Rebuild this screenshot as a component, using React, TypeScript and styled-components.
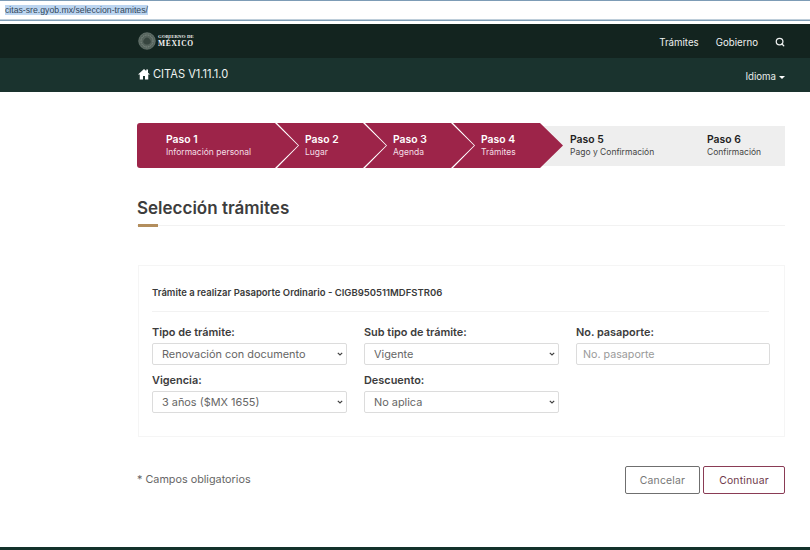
import React from 'react';
import styled, { createGlobalStyle } from 'styled-components';
import { Search } from 'lucide-react';

const chevron = `url("data:image/svg+xml,%3Csvg xmlns='http://www.w3.org/2000/svg' width='6' height='4' viewBox='0 0 6 4'%3E%3Cpath d='M.8.8 3 3l2.200-2.200' fill='none' stroke='%23444' stroke-width='1.200'/%3E%3C/svg%3E")`;

const Global = createGlobalStyle`
  html, body { margin: 0; padding: 0; background: #fff; }
  body { font-family: Inter, "Open Sans", sans-serif; width: 810px; height: 550px; overflow: hidden; }
  * { box-sizing: border-box; }
`;
const Page = styled.div`
  width: 810px; height: 550px; display: flex; flex-direction: column;
`;
const UrlBar = styled.div`
  height: 24px; padding: 4px 0 0 5px; background: #fff; flex: none;
  border-top: 1.5px solid #7d9cb6;
  box-shadow: inset 0 -3px 0 #fff, inset 0 -4.500px 0 #7f9db6;
  display: flex; align-items: flex-start;
`;
const UrlText = styled.span`
  font: 8.700px/10px "Liberation Sans", sans-serif; color: #33475a; background: #bcd5f0;
`;
const TopBar = styled.div`
  height: 34px; flex: none; background: #13241f; color: #fff;
  display: flex; align-items: center; padding: 0 25px 0 138px; justify-content: space-between;
`;
const Brand = styled.div`display: flex; align-items: center; gap: 2px;`;
const BrandText = styled.div`
  display: flex; flex-direction: column; font-family: "Liberation Serif", serif; font-weight: 700; color: #f2f2f2;
`;
const BrandSmall = styled.span`font-size: 4.800px; line-height: 6px; letter-spacing: .15px;`;
const BrandBig = styled.span`font-size: 7.500px; line-height: 8px; letter-spacing: .700px;`;
const TopNav = styled.nav`display: flex; align-items: center; gap: 17px; font-size: 9.700px; color: #eef1f0; margin-top: 2px;`;
const SubBar = styled.div`
  height: 34px; flex: none; background: #1a332e; color: #fff;
  display: flex; align-items: center; justify-content: space-between; padding: 0 25px 0 138px;
`;
const HomeLink = styled.div`display: flex; align-items: center; gap: 3px; font-size: 11.100px; margin-top: -3px; color: #f0f3f2;`;
const Lang = styled.div`display: flex; align-items: center; gap: 3px; font-size: 9.700px; color: #e6ebe9; margin-top: 2px;`;
const Caret = styled.span`
  width: 0; height: 0; border-left: 3px solid transparent; border-right: 3px solid transparent; border-top: 3px solid #fff; margin-top: 2px;
`;
const Main = styled.main`flex: 1; padding: 31px 25px 0 137px; display: flex; flex-direction: column;`;
const Steps = styled.div`display: flex; align-items: center; height: 45px;`;
const Step = styled.div<{ $w: number; $first?: boolean }>`
  width: ${p => p.$w}px; height: 45px; flex: none; background: #9d2449; color: #fff; position: relative; z-index: 1;
  padding-left: ${p => (p.$first ? 29 : 28)}px; display: flex; flex-direction: column; justify-content: center;
  margin-left: ${p => (p.$first ? 0 : -21)}px;
  border-radius: ${p => (p.$first ? '3px 0 0 3px' : '0')};
  clip-path: ${p => p.$first
    ? 'polygon(0 0, calc(100% - 23px) 0, 100% 50%, calc(100% - 23px) 100%, 0 100%)'
    : 'polygon(0 0, calc(100% - 23px) 0, 100% 50%, calc(100% - 23px) 100%, 0 100%, 22px 50%)'};
`;
const PendingStep = styled.div<{ $w: number; $pad: number; $ml: number }>`
  width: ${p => p.$w}px; height: 40px; flex: none; background: #eeeeee; color: #1f1f1f;
  margin-left: ${p => p.$ml}px; padding-left: ${p => p.$pad}px;
  display: flex; flex-direction: column; justify-content: center;
`;
const StepTitle = styled.span`font-size: 10.400px; line-height: 12px; font-weight: 600;`;
const StepSub = styled.span<{ $muted?: boolean }>`
  font-size: 8.500px; line-height: 12px; color: ${p => (p.$muted ? '#444' : '#f4dfe5')};
`;
const TitleBlock = styled.div`margin-top: 30px; height: 28px; position: relative; border-bottom: 1px solid #f2f2f2; margin-bottom: 39px;`;
const Title = styled.h1`margin: 0; font-size: 17px; line-height: 21px; font-weight: 600; color: #3d3d3d;`;
const Accent = styled.span`
  position: absolute; left: 1px; bottom: -2px; width: 20px; height: 3px; background: #b38e5d;
`;
const Card = styled.section`
  height: 172px; border: 1px solid #f5f5f5; padding: 21px 15px 0 13px; margin-left: 1px;
`;
const CardHead = styled.div`
  font-size: 9.500px; font-weight: 600; line-height: 12px; color: #3a3a3a; padding-bottom: 12px; border-bottom: 1px solid #f2f2f2; margin-bottom: 14px;
`;
const FormGrid = styled.div`
  display: grid; grid-template-columns: 195px 195px 194px; column-gap: 17px; row-gap: 9px;
`;
const Field = styled.label`display: flex; flex-direction: column; gap: 5px;`;
const Label = styled.span`font-size: 10.900px; line-height: 12px; font-weight: 600; color: #3c3c3c;`;
const Select = styled.select`
  height: 22px; width: 100%; border: 1px solid #dcdcdc; border-radius: 2px;
  appearance: none; background: #fff ${chevron} no-repeat right 3px center;
  font: 400 10.900px Inter, sans-serif; color: #666; padding: 0 9px; outline: none;
`;
const Input = styled.input`
  height: 22px; width: 100%; background: #fff; border: 1px solid #dcdcdc; border-radius: 2px;
  font: 400 10.700px Inter, sans-serif; padding: 0 6px; outline: none;
  &::placeholder { color: #9a9a9a; }
`;
const Actions = styled.div`
  display: flex; align-items: center; justify-content: space-between; margin-top: 29px;
`;
const Note = styled.span`font-size: 10.800px; color: #666; margin-top: -1px;`;
const Buttons = styled.div`display: flex; gap: 3px;`;
const Btn = styled.button<{ $w: number; $c: string; $t: string }>`
  width: ${p => p.$w}px; height: 28px; background: #fff; border: 1px solid ${p => p.$c}; border-radius: 2px;
  color: ${p => p.$t}; font: 400 10.400px Inter, sans-serif; letter-spacing: .2px; padding: 0;
`;
const BottomBar = styled.div`height: 3px; flex: none; background: #13322b;`;

const Seal = () => (
  <svg width="18" height="18" viewBox="0 0 18 18">
    <circle cx="9" cy="9" r="8.300" fill="#55635c" stroke="#7c8983" strokeWidth=".6" />
    <circle cx="9" cy="9" r="6" fill="none" stroke="#8f9a94" strokeWidth=".8" strokeDasharray="1 .8" />
    <path d="M5.500 8.500c1-2 2.500-3 3.500-3s2.500 1 3.500 3-1 4-3.500 4-4.500-2-3.500-4z" fill="#37453f" />
  </svg>
);
const Home = () => (
  <svg width="12" height="12" viewBox="0 0 24 24" fill="#fff">
    <path d="M12 2 0 13h3.500v10H10v-7h4v7h6.500V13H24l-4-3.700V3h-3.500v3.100z" />
  </svg>
);

export default function App() {
  return (
    <Page>
      <Global />
      <UrlBar><UrlText>citas-sre.gyob.mx/seleccion-tramites/</UrlText></UrlBar>
      <TopBar>
        <Brand>
          <Seal />
          <BrandText>
            <BrandSmall>GOBIERNO DE</BrandSmall>
            <BrandBig>MÉXICO</BrandBig>
          </BrandText>
        </Brand>
        <TopNav>
          <span>Trámites</span>
          <span>Gobierno</span>
          <Search size={10} strokeWidth={3} />
        </TopNav>
      </TopBar>
      <SubBar>
        <HomeLink><Home />CITAS V1.11.1.0</HomeLink>
        <Lang>Idioma <Caret /></Lang>
      </SubBar>
      <Main>
        <Steps>
          <Step $first $w={161}>
            <StepTitle>Paso 1</StepTitle>
            <StepSub>Información personal</StepSub>
          </Step>
          <Step $w={109}>
            <StepTitle>Paso 2</StepTitle>
            <StepSub>Lugar</StepSub>
          </Step>
          <Step $w={109}>
            <StepTitle>Paso 3</StepTitle>
            <StepSub>Agenda</StepSub>
          </Step>
          <Step $w={110}>
            <StepTitle>Paso 4</StepTitle>
            <StepSub>Trámites</StepSub>
          </Step>
          <PendingStep $w={138} $ml={-23} $pad={30}>
            <StepTitle>Paso 5</StepTitle>
            <StepSub $muted>Pago y Confirmación</StepSub>
          </PendingStep>
          <PendingStep $w={107} $ml={0} $pad={29}>
            <StepTitle>Paso 6</StepTitle>
            <StepSub $muted>Confirmación</StepSub>
          </PendingStep>
        </Steps>
        <TitleBlock>
          <Title>Selección trámites</Title>
          <Accent />
        </TitleBlock>
        <Card>
          <CardHead>Trámite a realizar Pasaporte Ordinario - CIGB950511MDFSTR06</CardHead>
          <FormGrid>
            <Field>
              <Label>Tipo de trámite:</Label>
              <Select defaultValue="a"><option value="a">Renovación con documento</option></Select>
            </Field>
            <Field>
              <Label>Sub tipo de trámite:</Label>
              <Select defaultValue="a"><option value="a">Vigente</option></Select>
            </Field>
            <Field>
              <Label>No. pasaporte:</Label>
              <Input placeholder="No. pasaporte" />
            </Field>
            <Field>
              <Label>Vigencia:</Label>
              <Select defaultValue="a"><option value="a">3 años ($MX 1655)</option></Select>
            </Field>
            <Field>
              <Label>Descuento:</Label>
              <Select defaultValue="a"><option value="a">No aplica</option></Select>
            </Field>
          </FormGrid>
        </Card>
        <Actions>
          <Note>* Campos obligatorios</Note>
          <Buttons>
            <Btn $w={75} $c="#6f6f6f" $t="#777">Cancelar</Btn>
            <Btn $w={82} $c="#8a3b55" $t="#6f3a4c">Continuar</Btn>
          </Buttons>
        </Actions>
      </Main>
      <BottomBar />
    </Page>
  );
}
